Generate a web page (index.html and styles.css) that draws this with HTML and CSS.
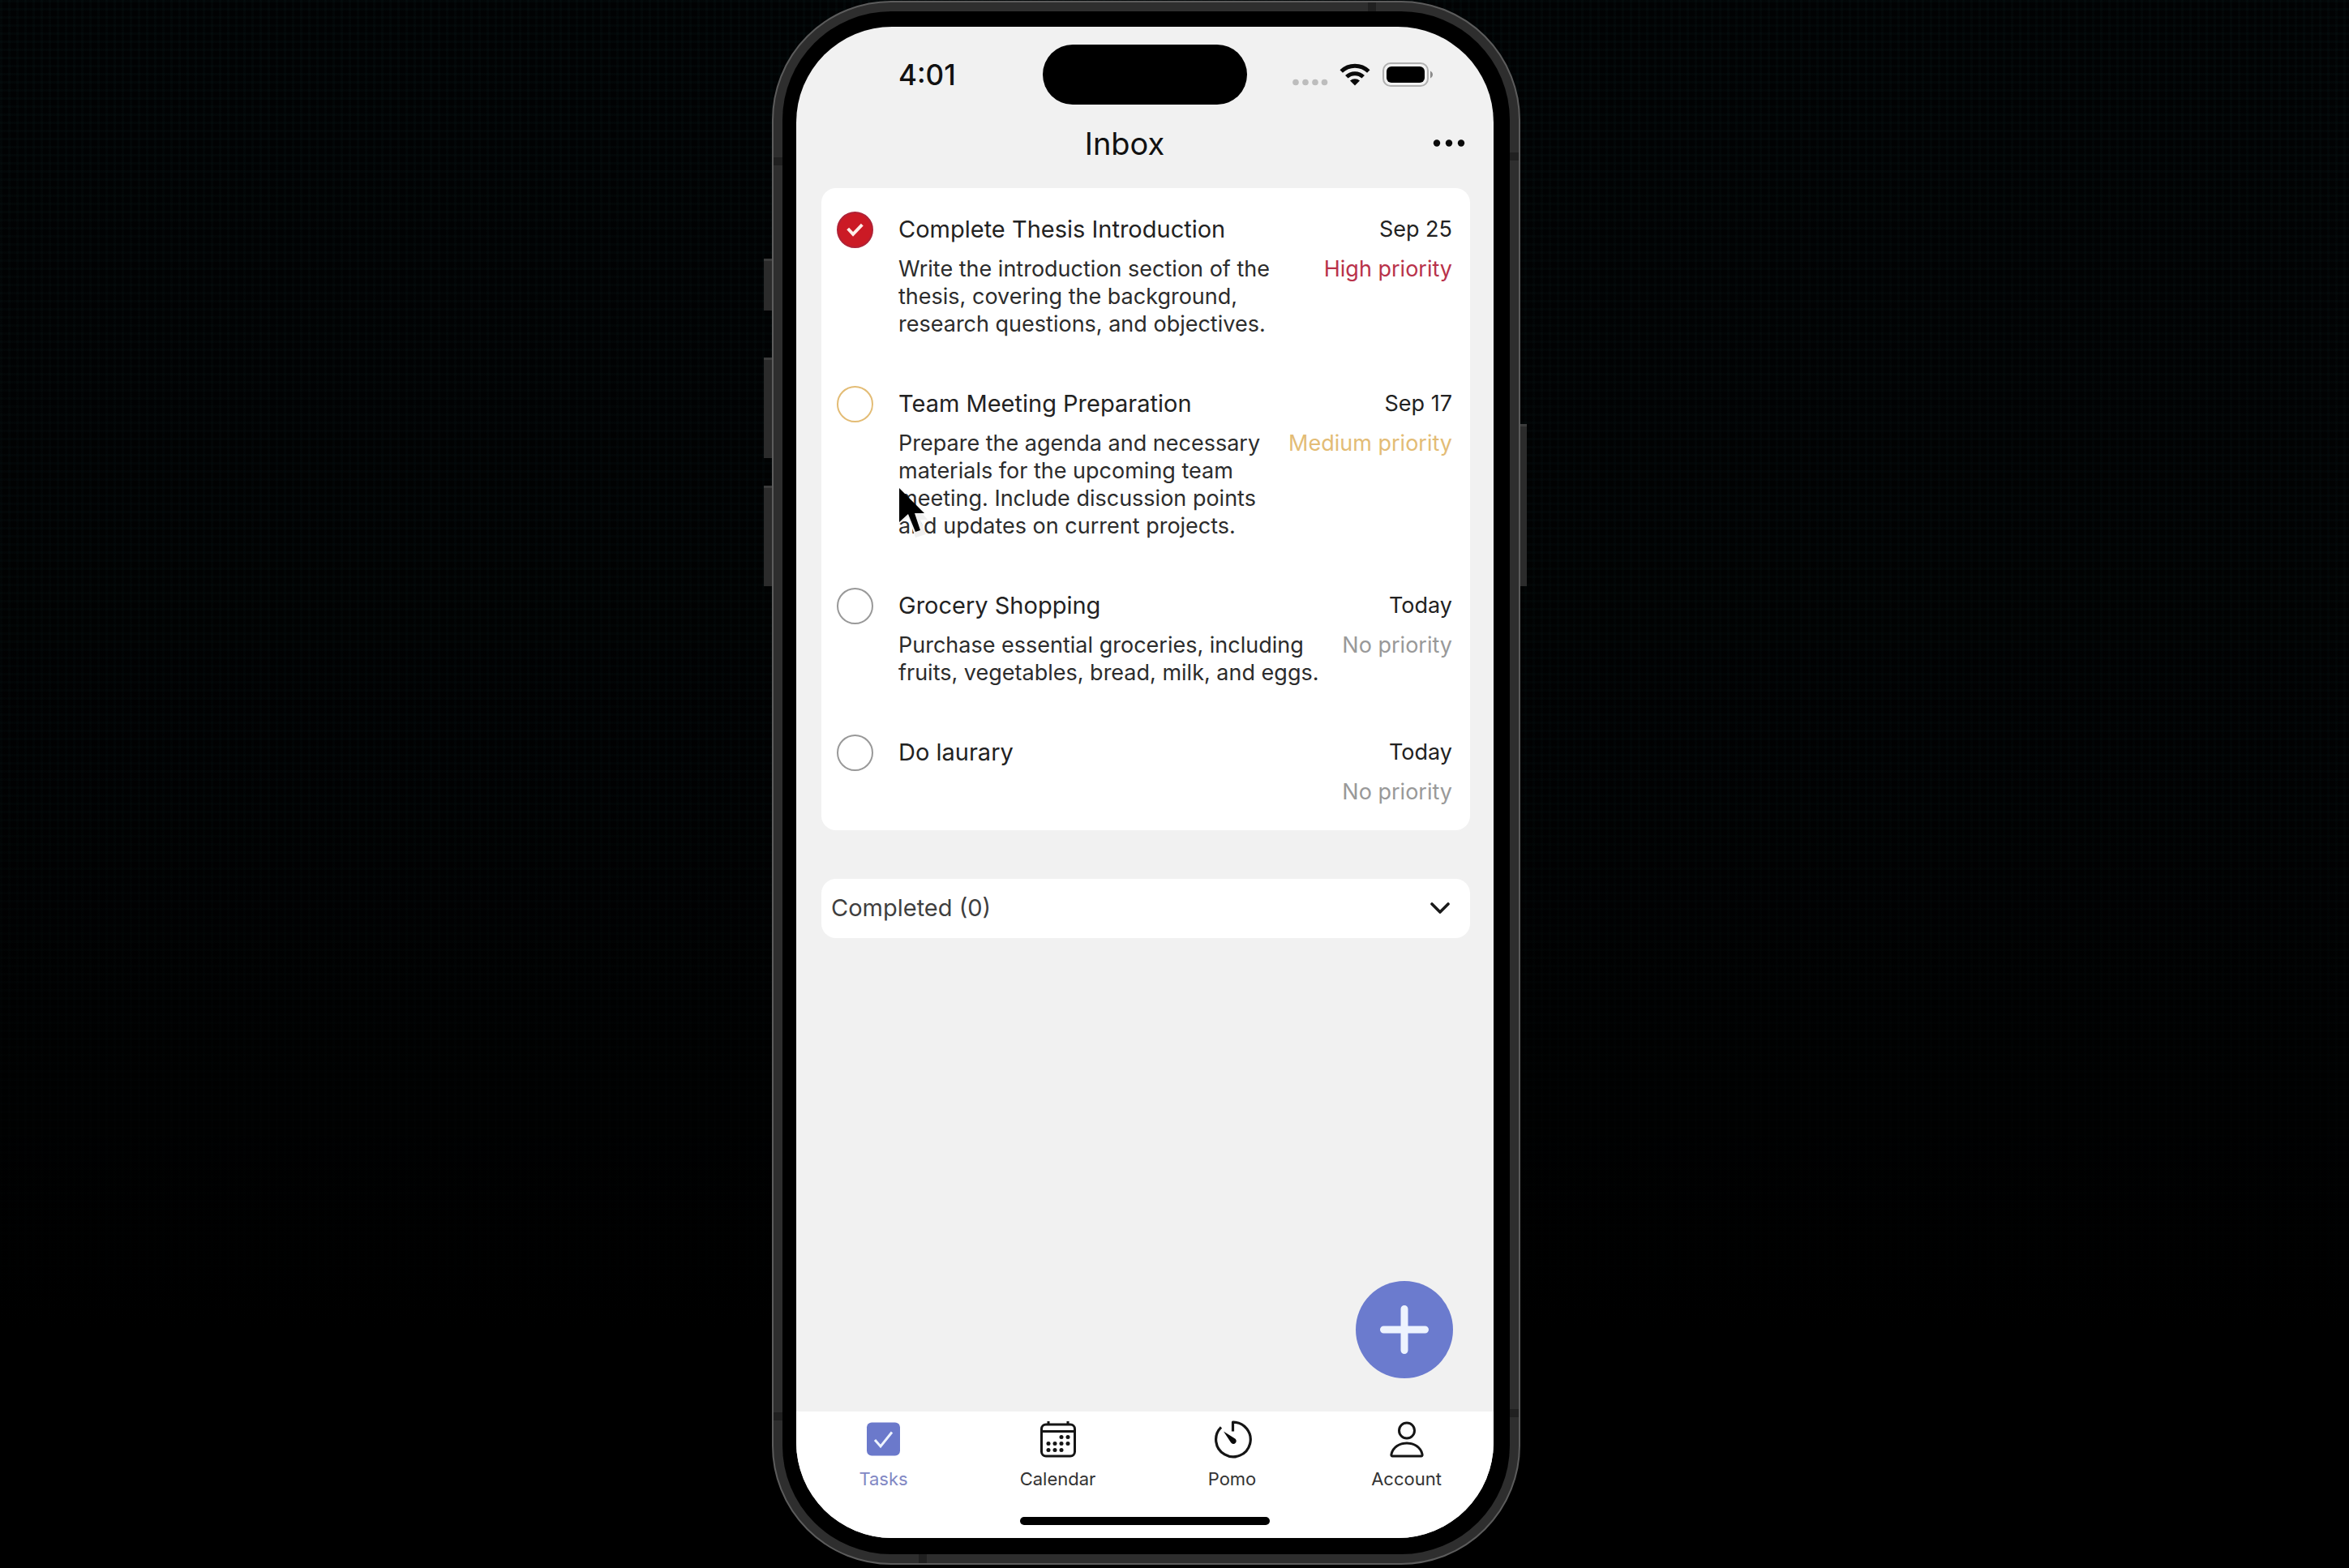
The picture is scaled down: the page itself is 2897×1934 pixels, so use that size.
FILE: index.html
```html
<!DOCTYPE html>
<html lang="en">
<head>
<meta charset="utf-8">
<meta name="viewport" content="width=device-width, initial-scale=1">
<title>Inbox</title>
<link rel="stylesheet" href="styles.css">
</head>
<body>
<div class="stage">
  <div class="phone">
    <span class="side-key side-key-action"></span>
    <span class="side-key side-key-up"></span>
    <span class="side-key side-key-down"></span>
    <span class="side-key side-key-power"></span>
    <div class="bezel">
      <div class="screen">
        <div class="status-bar">
          <span class="clock">4:01</span>
          <span class="island"></span>
          <div class="indicators">
            <svg width="43" height="28" viewBox="0 0 43 28" fill="#bdbdbd" aria-hidden="true">
              <circle cx="4" cy="23.500" r="3.800"/><circle cx="16" cy="23.500" r="3.800"/><circle cx="28" cy="23.500" r="3.800"/><circle cx="39.500" cy="23.500" r="3.800"/>
            </svg>
            <svg width="38" height="28" viewBox="0 0 38 28" aria-hidden="true">
              <g fill="none" stroke="#0a0a0a" stroke-width="5">
                <path d="M2.200 10a24.300 24.300 0 0 1 33.600 0"/>
                <path d="M8.800 16.800a14.600 14.600 0 0 1 20.400 0"/>
              </g>
              <path d="M19 27.500l-6-5.900a8.600 8.600 0 0 1 12 0z" fill="#0a0a0a"/>
            </svg>
            <svg width="63" height="30" viewBox="0 0 63 30" aria-hidden="true">
              <rect x="1" y="1" width="55" height="28" rx="9" fill="none" stroke="#b0b0b0" stroke-width="2"/>
              <rect x="5" y="5" width="47" height="20" rx="6" fill="#000"/>
              <path d="M59 10.500c4 2 4 7 0 9z" fill="#8c8c8c"/>
            </svg>
          </div>
        </div>

        <header class="header">
          <h1 class="header-title">Inbox</h1>
          <button class="more" type="button" aria-label="More options">
            <svg width="40" height="10" viewBox="0 0 40 10" fill="#0a0a0a" aria-hidden="true">
              <circle cx="5" cy="4.500" r="4.200"/><circle cx="20" cy="4.500" r="4.200"/><circle cx="35" cy="4.500" r="4.200"/>
            </svg>
          </button>
        </header>

        <main class="content">
          <ul class="card task-list">
            <li class="task task-high">
              <span class="tick">
                <input class="tick-box" type="checkbox" id="task-thesis" checked>
                <svg class="tick-mark" viewBox="0 0 46 46" aria-hidden="true"><path d="M14 21.500l6.500 7L32 16.500" fill="none" stroke="#fdeee9" stroke-width="4"/></svg>
              </span>
              <div class="task-body">
                <div class="task-line">
                  <label class="task-title" for="task-thesis">Complete Thesis Introduction</label>
                  <time class="task-date">Sep 25</time>
                </div>
                <div class="task-line">
                  <p class="task-text">Write the introduction section of the thesis, covering the background, research questions, and objectives.</p>
                  <span class="priority">High priority</span>
                </div>
              </div>
            </li>
            <li class="task task-medium">
              <span class="tick">
                <input class="tick-box" type="checkbox" id="task-meeting">
              </span>
              <div class="task-body">
                <div class="task-line">
                  <label class="task-title" for="task-meeting">Team Meeting Preparation</label>
                  <time class="task-date">Sep 17</time>
                </div>
                <div class="task-line">
                  <p class="task-text">Prepare the agenda and necessary materials for the upcoming team meeting. Include discussion points and updates on current projects.</p>
                  <span class="priority">Medium priority</span>
                </div>
              </div>
              <svg class="pointer" viewBox="0 0 44 72" aria-hidden="true">
                <path d="M4 47l12-9 9 25 13-4-7-18h9l-5-6-20-12z" fill="#f0f0f0"/>
                <path d="M5 2v42l11-10 9 22 6-2-7-21h12z" fill="#000"/>
              </svg>
            </li>
            <li class="task">
              <span class="tick">
                <input class="tick-box" type="checkbox" id="task-grocery">
              </span>
              <div class="task-body">
                <div class="task-line">
                  <label class="task-title" for="task-grocery">Grocery Shopping</label>
                  <time class="task-date">Today</time>
                </div>
                <div class="task-line">
                  <p class="task-text">Purchase essential groceries, including fruits, vegetables, bread, milk, and eggs.</p>
                  <span class="priority">No priority</span>
                </div>
              </div>
            </li>
            <li class="task">
              <span class="tick">
                <input class="tick-box" type="checkbox" id="task-laundry">
              </span>
              <div class="task-body">
                <div class="task-line">
                  <label class="task-title" for="task-laundry">Do laurary</label>
                  <time class="task-date">Today</time>
                </div>
                <div class="task-line">
                  <p class="task-text"></p>
                  <span class="priority">No priority</span>
                </div>
              </div>
            </li>
          </ul>

          <button class="card completed" type="button" aria-expanded="false">
            <span>Completed (0)</span>
            <svg width="26" height="18" viewBox="0 0 26 18" aria-hidden="true"><path d="M3 4l10 10L23 4" fill="none" stroke="#1a1a1a" stroke-width="3.600" stroke-linecap="round" stroke-linejoin="round"/></svg>
          </button>

          <button class="add" type="button" aria-label="Add task">
            <svg width="60" height="60" viewBox="0 0 60 60" aria-hidden="true"><path d="M30 4.500v51M4.500 30h51" stroke="#edf3fe" stroke-width="9" stroke-linecap="round"/></svg>
          </button>
        </main>

        <footer class="dock">
          <nav class="tabs">
            <a class="tab tab-active" href="#tasks">
              <svg viewBox="0 0 46 46" aria-hidden="true">
                <rect x="2" y="2.500" width="41" height="41" rx="6" fill="#6b79cb"/>
                <path d="M12 24l7 8L33 14.500" fill="none" stroke="#eef4ff" stroke-width="3"/>
              </svg>
              <span>Tasks</span>
            </a>
            <a class="tab" href="#calendar">
              <svg viewBox="0 0 46 46" aria-hidden="true">
                <g fill="none" stroke="#151515" stroke-width="3">
                  <rect x="2.500" y="5" width="41" height="39" rx="5.500"/>
                  <path d="M2.500 13.500h41M11 1v5M35 1v5"/>
                </g>
                <g fill="#151515">
                  <circle cx="27" cy="20.500" r="2.500"/><circle cx="35" cy="20.500" r="2.500"/>
                  <circle cx="11" cy="28.500" r="2.500"/><circle cx="19" cy="28.500" r="2.500"/><circle cx="27" cy="28.500" r="2.500"/><circle cx="35" cy="28.500" r="2.500"/>
                  <circle cx="11" cy="36.500" r="2.500"/><circle cx="19" cy="36.500" r="2.500"/><circle cx="27" cy="36.500" r="2.500"/>
                </g>
              </svg>
              <span>Calendar</span>
            </a>
            <a class="tab" href="#pomo">
              <svg viewBox="0 0 46 46" aria-hidden="true">
                <path d="M9 8.300A21.300 21.300 0 1 0 23.500 2.200v11.300" fill="none" stroke="#151515" stroke-width="3.200" stroke-linejoin="round"/>
                <path d="M12 13.500l13.500 8.500a3.600 3.600 0 1 1-4.600 5z" fill="#0a0a0a"/>
              </svg>
              <span>Pomo</span>
            </a>
            <a class="tab" href="#account">
              <svg viewBox="0 0 46 46" aria-hidden="true">
                <g fill="none" stroke="#151515" stroke-width="3">
                  <circle cx="23" cy="12.500" r="9.500"/>
                  <path d="M5 44C4 44 3.700 43 4 41.500 6 33 14 28 23 28S40 33 42 41.500c.3 1.500 0 2.500-1 2.500z"/>
                </g>
              </svg>
              <span>Account</span>
            </a>
          </nav>
          <span class="home-bar"></span>
        </footer>
      </div>
    </div>
  </div>
</div>
</body>
</html>
```
FILE: styles.css
```css
*,
*::before,
*::after {
  box-sizing: border-box;
}

body {
  margin: 0;
  background: #000;
  color: #222;
  font-family: Inter, "Liberation Sans", sans-serif;
  font-size: 29px;
  line-height: 36px;
}

h1,
p,
ul {
  margin: 0;
  padding: 0;
}

button {
  margin: 0;
  padding: 0;
  border: 0;
  background: none;
  color: inherit;
  font: inherit;
  cursor: pointer;
}

svg {
  display: block;
  overflow: visible;
}

/* Dark woven backdrop that fades out towards the bottom */
.stage {
  display: flex;
  justify-content: center;
  min-height: 100vh;
  padding: 1px 70px 4px 0;
  background:
    linear-gradient(rgba(0, 0, 0, 0), rgba(0, 0, 0, .3) 50%, #000 85%),
    repeating-linear-gradient(90deg, rgba(20, 60, 60, .08) 0 3px, rgba(0, 0, 0, 0) 3px 10px),
    repeating-linear-gradient(rgba(20, 60, 60, .08) 0 3px, rgba(0, 0, 0, 0) 3px 10px),
    #010203;
}

/* Handset */
.phone {
  position: relative;
  display: flex;
  width: 100%;
  max-width: 923px;
  padding: 11px;
  border: 2px solid #5c5c5c;
  border-radius: 147px;
  background:
    linear-gradient(#202020, #202020) 0 191px / 11px 10px no-repeat,
    linear-gradient(#202020, #202020) 0 1739px / 11px 10px no-repeat,
    linear-gradient(#202020, #202020) 100% 185px / 11px 10px no-repeat,
    linear-gradient(#202020, #202020) 100% 1735px / 11px 10px no-repeat,
    linear-gradient(#202020, #202020) 733px 0 / 10px 11px no-repeat,
    linear-gradient(#202020, #202020) 179px 100% / 10px 11px no-repeat,
    #2e2e2e;
}

.side-key {
  position: absolute;
  left: -12px;
  width: 10px;
  height: 124px;
  border-top: 3px solid #3c3c3c;
  background: #2b2b2b;
}

.side-key-action {
  top: 316px;
  height: 64px;
}

.side-key-up {
  top: 438px;
}

.side-key-down {
  top: 596px;
}

.side-key-power {
  top: 520px;
  right: -10px;
  left: auto;
  width: 8px;
  height: 200px;
}

.bezel {
  display: flex;
  flex: 1;
  padding: 19px 20px 20px 17px;
  border-radius: 134px;
  background: #000;
}

.screen {
  display: flex;
  flex: 1;
  flex-direction: column;
  overflow: hidden;
  border-radius: 118px;
  background: #f1f1f1;
}

/* Status bar */
.status-bar {
  display: grid;
  grid-template-columns: 1fr auto 1fr;
  align-items: center;
  padding: 22px 74px 0 126px;
}

.clock {
  color: #111;
  font-size: 35px;
  font-weight: 500;
}

.island {
  width: 252px;
  height: 74px;
  margin-right: 26px;
  margin-left: -26px;
  border-radius: 37px;
  background: #000;
}

.indicators {
  display: flex;
  align-items: center;
  justify-content: flex-end;
  gap: 15px;
}

/* Header */
.header {
  display: flex;
  align-items: center;
  padding: 24px 29px 0 31px;
}

.header-title {
  flex: 1;
  color: #111;
  font-size: 38px;
  font-weight: 400;
  line-height: 48px;
  text-align: center;
}

.more {
  display: flex;
  align-items: center;
  justify-content: center;
  width: 52px;
  height: 48px;
}

/* Task list */
.content {
  position: relative;
  display: flex;
  flex: 1;
  flex-direction: column;
  gap: 60px;
  padding: 31px 29px 0 31px;
}

.card {
  border-radius: 18px;
  background: #fff;
}

.task-list {
  display: flex;
  flex-direction: column;
  gap: 63px;
  padding: 33px 22px 30px 19px;
  list-style: none;
}

.task {
  position: relative;
  display: flex;
  gap: 31px;
  color: #999;
}

.task-high {
  color: #b9324a;
}

.task-medium {
  color: #e3bc75;
}

.tick {
  display: grid;
  flex: none;
  width: 45px;
  height: 36px;
  align-items: center;
}

.tick-box,
.tick-mark {
  grid-area: 1 / 1;
  width: 45px;
  height: 45px;
  margin: -5px 0;
}

.tick-box {
  appearance: none;
  border: 2px solid currentColor;
  border-radius: 50%;
  background: #fff;
  color: inherit;
}

.tick-box:checked {
  border-color: #b02337;
  background: #cb1a25;
}

.tick-mark {
  z-index: 1;
  pointer-events: none;
}

.task-body {
  display: flex;
  flex: 1;
  flex-direction: column;
  gap: 14px;
}

.task-line {
  display: flex;
  justify-content: space-between;
  gap: 20px;
}

.task-title,
.task-date {
  color: #222;
}

.task-date,
.task-text,
.priority {
  font-size: 27px;
}

.task-text,
.priority {
  line-height: 34px;
}

.task-text {
  flex: 1;
  color: #2c2c2c;
}

.priority {
  flex: none;
}

.pointer {
  position: absolute;
  top: 120px;
  left: 72px;
  width: 44px;
  height: 72px;
}

.completed {
  display: flex;
  align-items: center;
  justify-content: space-between;
  padding: 18px 24px 19px 12px;
  color: #3f3f3f;
}

.add {
  position: absolute;
  right: 50px;
  bottom: 41px;
  display: flex;
  align-items: center;
  justify-content: center;
  width: 120px;
  height: 120px;
  border-radius: 50%;
  background: #6b7bce;
}

/* Bottom tabs */
.dock {
  display: flex;
  flex-direction: column;
  gap: 34px;
  align-items: center;
  padding: 11px 0 16px;
  background: #fff;
}

.tabs {
  display: grid;
  grid-template-columns: repeat(4, 1fr);
  width: 100%;
}

.tab {
  display: flex;
  flex-direction: column;
  gap: 13px;
  align-items: center;
  color: #333;
  font-size: 22px;
  line-height: 26px;
  text-decoration: none;
}

.tab svg {
  width: 46px;
  height: 46px;
}

.tab-active {
  color: #8288c4;
}

.home-bar {
  width: 308px;
  height: 10px;
  border-radius: 5px;
  background: #000;
}
```
